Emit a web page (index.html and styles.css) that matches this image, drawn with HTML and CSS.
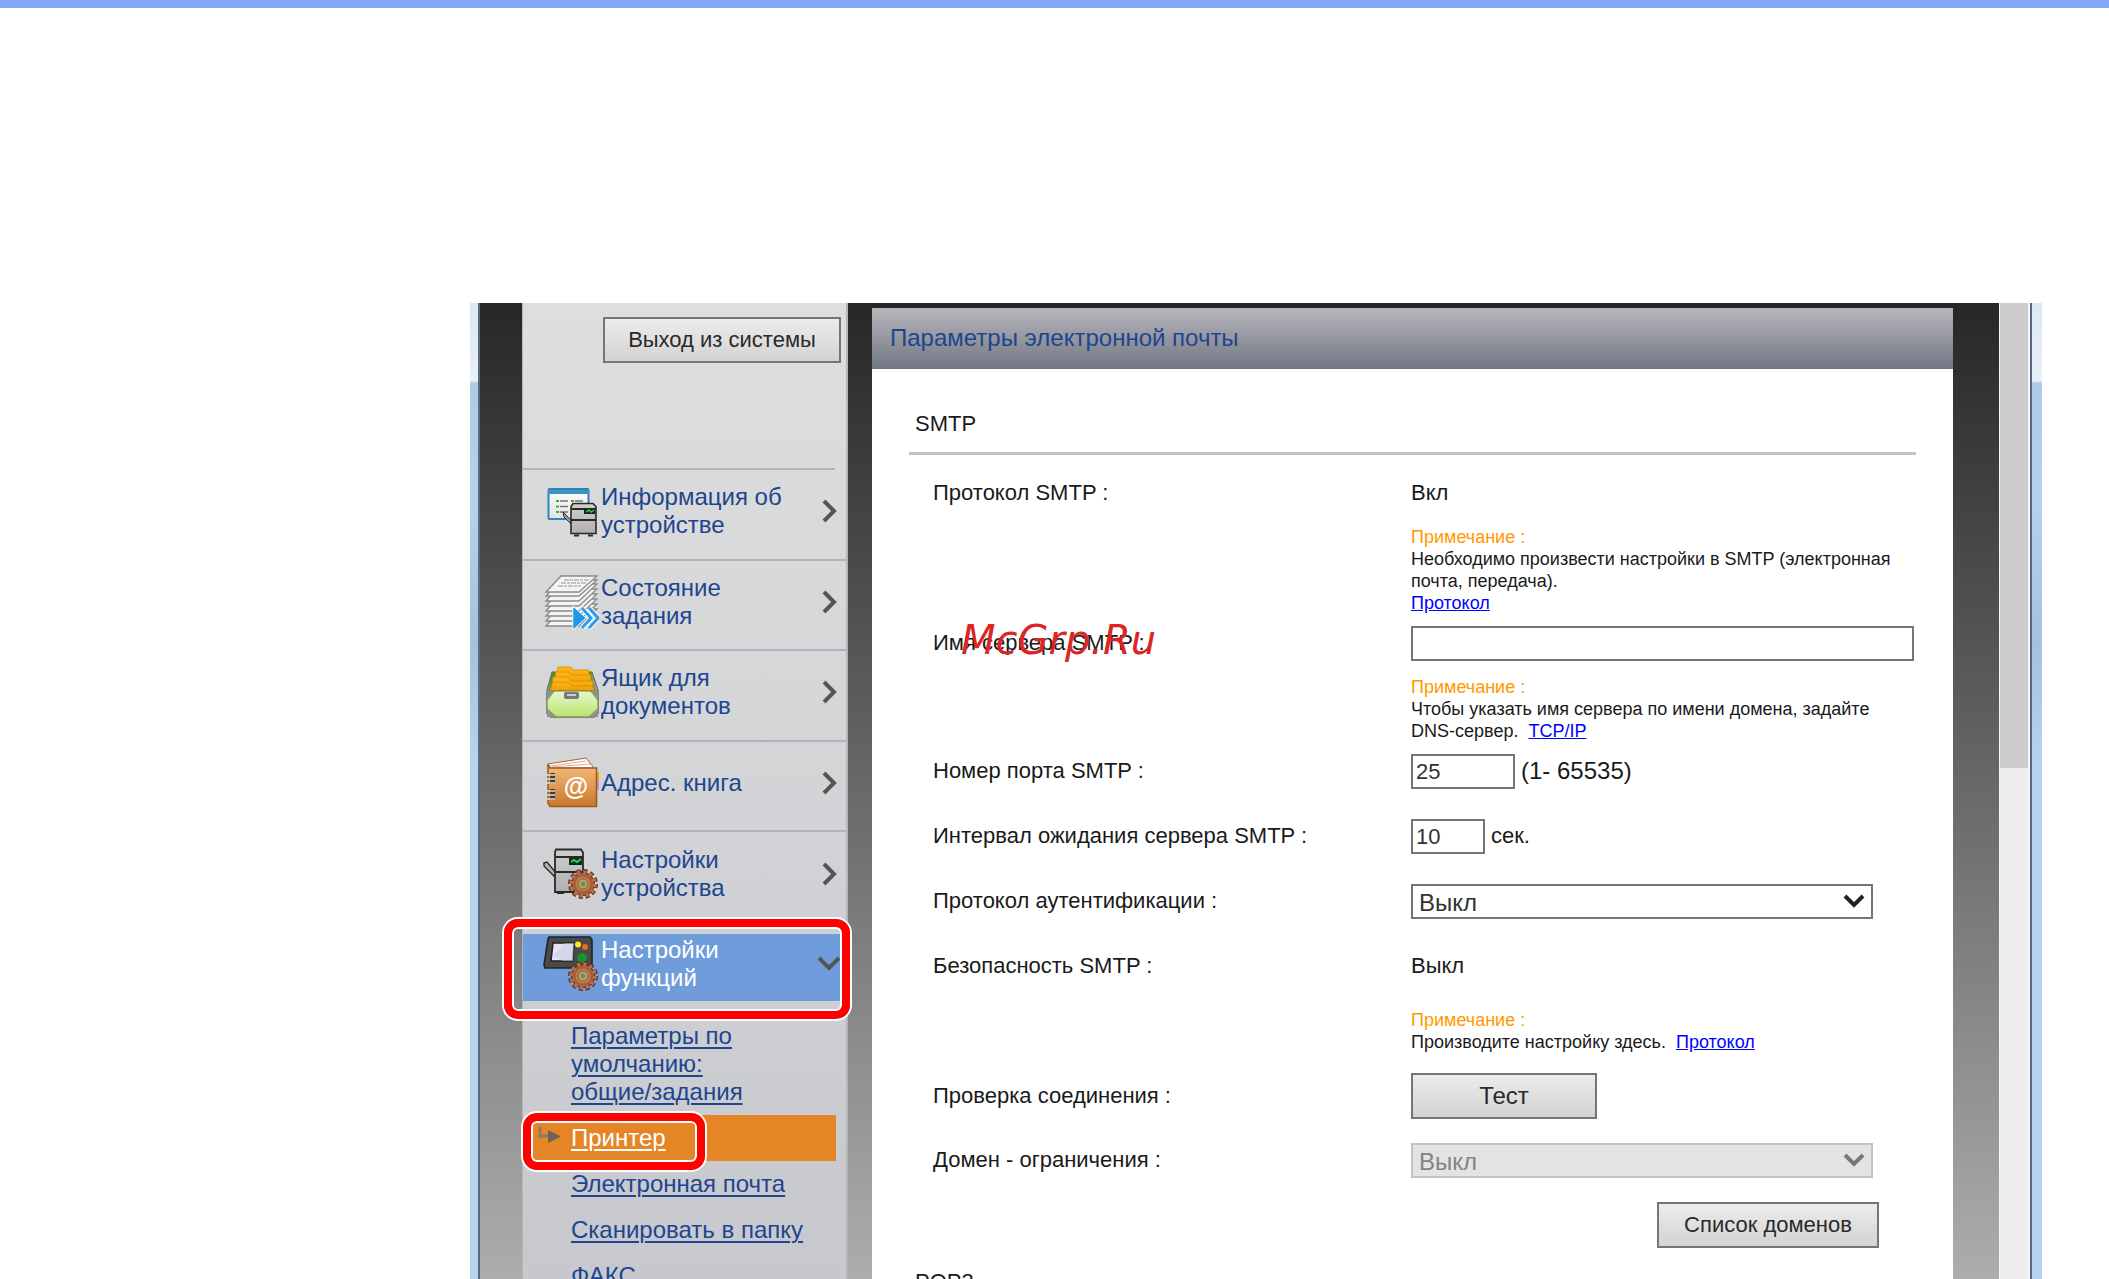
FILE: index.html
```html
<!DOCTYPE html>
<html lang="ru">
<head>
<meta charset="utf-8">
<title>Параметры электронной почты</title>
<link rel="stylesheet" href="styles.css">
</head>
<body>
<svg class="defs" aria-hidden="true">
  <defs>
    <linearGradient id="paper" x1="0" y1="0" x2="0" y2="1"><stop offset="0" stop-color="#fff"/><stop offset="1" stop-color="#e2e2e2"/></linearGradient>
    <linearGradient id="metal" x1="0" y1="0" x2="0" y2="1"><stop offset="0" stop-color="#cfcfcf"/><stop offset="1" stop-color="#b0b0b0"/></linearGradient>
    <linearGradient id="green" x1="0" y1="0" x2="0" y2="1"><stop offset="0" stop-color="#e6f7cf"/><stop offset="1" stop-color="#b9e46b"/></linearGradient>
    <linearGradient id="folder" x1="0" y1="0" x2="0" y2="1"><stop offset="0" stop-color="#ffb91e"/><stop offset="1" stop-color="#f09a00"/></linearGradient>
    <linearGradient id="cover" x1="0" y1="0" x2="0" y2="1"><stop offset="0" stop-color="#f6bd80"/><stop offset="1" stop-color="#c9782c"/></linearGradient>
    <g id="gear">
      <circle r="12.5" fill="none" stroke="#5e2d17" stroke-width="5" stroke-dasharray="3.9 2.64"/>
      <circle r="11.5" fill="#a55c37" stroke="#5e2d17"/>
      <circle r="11.8" fill="none" stroke="#b9714a" stroke-width="4" stroke-dasharray="3 3.18"/>
      <circle r="7.5" fill="#c07a50"/>
      <circle r="5" fill="#b9a94e" stroke="#7d6a2c"/>
      <circle r="2.4" fill="#6d7f99"/>
    </g>
  </defs>
</svg>
<div class="page">
  <div class="window">
    <div class="edge edge-left"></div>
    <div class="screen">
      <aside class="sidebar">
        <button class="btn logout" type="button">Выход из системы</button>
        <nav>
          <div class="menu">
            <a class="item" href="#">
              <svg class="icon" viewBox="0 0 56 56">
                <rect x="5.5" y="6" width="40" height="30" rx="1" fill="url(#paper)" stroke="#2d86b8" stroke-width="2"/>
                <path d="M5 7h41v4H5z" fill="#3c93c4"/>
                <path d="M17 18h8M32 18h8M17 23.500h8M17 29h8" stroke="#777" stroke-width="1.500"/>
                <path d="M13 18h3M28 18h3M13 23.500h3M13 29h3" stroke="#3cb51c" stroke-width="2"/>
                <path d="M20 29l8 8v4l-7-7z" fill="#999" stroke="#333"/>
                <path d="M30 20.500h20l3 3v27H28v-27z" fill="url(#metal)" stroke="#2a2a2a" stroke-width="1.600"/>
                <path d="M28 26h25M28 37h25M31 52.500h5M45 52.500h5" stroke="#2a2a2a" stroke-width="1.800"/>
                <path d="M41 26h11v5H41z" fill="#123"/><path d="M43 29l3-2 2 2 3-2" stroke="#2ddb2d" stroke-width="1.500" fill="none"/>
              </svg>
              <span class="text">Информация об устройстве</span>
              <svg class="chev" viewBox="0 0 16 24"><path d="M2 2l10 10L2 22" /></svg>
            </a>
            <a class="item" href="#">
              <svg class="icon" viewBox="0 0 56 56">
                <g fill="#f4f4f4" stroke="#8b8b8b" stroke-width="1.300">
                  <path d="M3 52L18 35H54L36 52z"/><path d="M3 47L18 30H54L36 47z"/><path d="M3 42L18 25H54L36 42z"/><path d="M3 37L18 20H54L36 37z"/><path d="M3 32L18 15H54L36 32z"/><path d="M3 27L18 10H54L36 27z"/><path d="M3 22L18 6H54L36 22z"/><path d="M3 18L18 2H54L36 18z"/>
                </g>
                <path d="M21 6h25M18 9h25M15 12h23" stroke="#b2b2b2" stroke-width="1.500" stroke-dasharray="5 1 3 1"/>
                <path d="M30 32l13 12-13 12z" fill="#1f97ee" stroke="#fff"/>
                <path d="M39 34l9 10-9 10M46 34l9 10-9 10" fill="none" stroke="#fff" stroke-width="5"/>
                <path d="M30.500 34v20l11-10z" fill="#1f97ee"/>
                <path d="M39 34l9 10-9 10M46 34l9 10-9 10" fill="none" stroke="#2a9df0" stroke-width="3"/>
              </svg>
              <span class="text">Состояние задания</span>
              <svg class="chev" viewBox="0 0 16 24"><path d="M2 2l10 10L2 22" /></svg>
            </a>
            <a class="item" href="#">
              <svg class="icon" viewBox="0 0 56 56">
                <path d="M9 8h40l6 18v24l-3 3H7l-3-3V26z" fill="#9b9b9b" stroke="#5d5d5d"/>
                <path d="M9 8h39l4 18H6z" fill="#4d8f2a"/>
                <g fill="url(#folder)" stroke="#d98c00" stroke-width=".8">
                  <path d="M15 3h13l2 3h16v12H13z"/><path d="M13 8h13l2 3h20v10H11z"/><path d="M10 13h15l3 4h22v9H8z"/><path d="M10 18l16 1 3 3h20l3 5H7z"/>
                </g>
                <path d="M4 27h51v23l-3 3H7l-3-3z" fill="url(#green)" stroke="#6d7a55"/>
                <path d="M4 27h8l-8 10zM55 27h-8l8 10zM4 44v9h10zM55 44v9H45z" fill="#8e9483"/>
                <rect x="21" y="28" width="15" height="7" rx="2" fill="#777"/><path d="M24 31h9" stroke="#ccc" stroke-width="2"/>
              </svg>
              <span class="text">Ящик для документов</span>
              <svg class="chev" viewBox="0 0 16 24"><path d="M2 2l10 10L2 22" /></svg>
            </a>
            <a class="item" href="#">
              <svg class="icon" viewBox="0 0 56 56">
                <path d="M50 17h7v8h-7z" fill="#f5a800"/><path d="M50 25h7v10h-7z" fill="#b992e0"/>
                <path d="M5 9l38-6 8 10H6z" fill="#fff" stroke="#a3652f"/>
                <path d="M7 11l36-5M9 12l38-3" stroke="#e8a898"/>
                <path d="M5 9l2 4h46.500v38.500H7L5 48z" fill="url(#cover)" stroke="#9c5c22" stroke-width="1.600"/>
                <path d="M7 18h5v11H7zM7 34h5v11H7z" fill="#4a3a2c"/>
                <path d="M3 20h9M3 24h9M3 28h9M3 36h9M3 40h9M3 44h9" stroke="#ddd" stroke-width="1.600"/>
                <text class="at" x="33" y="40" text-anchor="middle">@</text>
              </svg>
              <span class="text">Адрес. книга</span>
              <svg class="chev" viewBox="0 0 16 24"><path d="M2 2l10 10L2 22" /></svg>
            </a>
            <a class="item" href="#">
              <svg class="icon" viewBox="0 0 56 56">
                <path d="M1 17l3-1 9 11v5L1 20z" fill="#b5b5b5" stroke="#2a2a2a" stroke-width="1.400"/>
                <path d="M13 3.500h25l2 3V46H12V6z" fill="url(#metal)" stroke="#2a2a2a" stroke-width="1.800"/>
                <path d="M12 11h28M12 26h28M14 47h7" stroke="#2a2a2a" stroke-width="1.800"/>
                <path d="M26 12h13v7H26z" fill="#123"/><path d="M28 16l3-2 3 2 4-3" stroke="#2ddb2d" stroke-width="2" fill="none"/>
                <use href="#gear" x="40" y="38"/>
              </svg>
              <span class="text">Настройки устройства</span>
              <svg class="chev" viewBox="0 0 16 24"><path d="M2 2l10 10L2 22" /></svg>
            </a>
          </div>
          <a class="item active" href="#">
            <svg class="icon" viewBox="0 0 56 56">
              <path d="M6 1h41l2 3v27l-2 1H2l-1-3L5 3z" fill="#4a4a4a" stroke="#222" stroke-width="1.600"/>
              <path d="M10 7h21l-1 18H8z" fill="#e3e5f3" stroke="#222" stroke-width="1.500"/><path d="M10 20L22 7h9l-1 18H20z" fill="#c5c9e2" opacity=".5"/>
              <circle cx="35" cy="8.500" r="3" fill="#f5ec1c"/><circle cx="42" cy="11" r="3" fill="#ee6a1a"/><circle cx="39" cy="22" r="5" fill="#18932e"/>
              <use href="#gear" x="40" y="40"/>
            </svg>
            <span class="text">Настройки функций</span>
            <svg class="chev chev-down" viewBox="0 0 24 16"><path d="M2 2l10 10L22 2" /></svg>
            <span class="callout callout-item"></span>
          </a>
          <ul class="submenu">
            <li><a href="#">Параметры по умолчанию: общие/задания</a></li>
            <li class="current">
              <svg class="arrow" viewBox="0 0 24 18"><path d="M2 0v9h10" fill="none" stroke="#8a7a66" stroke-width="3"/><path d="M10 3l13 6.500L10 16z" fill="#6c6459"/></svg>
              <a href="#">Принтер</a>
              <span class="callout callout-link"></span>
            </li>
            <li><a href="#">Электронная почта</a></li>
            <li><a href="#">Сканировать в папку</a></li>
            <li><a href="#">ФАКС</a></li>
          </ul>
        </nav>
      </aside>
      <main class="panel">
        <h1>Параметры электронной почты</h1>
        <form>
          <h2>SMTP</h2>
          <div class="rows">
            <div class="row noted">
              <span>Протокол SMTP :</span>
              <div><div class="field">Вкл</div>
                <p class="note"><span class="note-title">Примечание :</span><br>Необходимо произвести настройки в SMTP (электронная почта, передача).<br><a href="#">Протокол</a></p></div>
            </div>
            <div class="row noted">
              <label class="marked" for="server">Имя сервера SMTP :<span class="watermark">McGrp.Ru</span></label>
              <div><input class="wide" id="server" type="text">
                <p class="note"><span class="note-title">Примечание :</span><br>Чтобы указать имя сервера по имени домена, задайте <span class="nowrap">DNS-сервер.</span>&nbsp; <a href="#">TCP/IP</a></p></div>
            </div>
            <div class="row">
              <label for="port">Номер порта SMTP :</label>
              <div class="field"><input class="port" id="port" type="text" value="25"><span class="range">(1- 65535)</span></div>
            </div>
            <div class="row">
              <label for="timeout">Интервал ожидания сервера SMTP :</label>
              <div class="field"><input class="timeout" id="timeout" type="text" value="10"><span>сек.</span></div>
            </div>
            <div class="row">
              <label for="auth">Протокол аутентификации :</label>
              <div class="select"><select id="auth"><option>Выкл</option></select><svg viewBox="0 0 22 16"><path d="M2 2l9 9 9-9"/></svg></div>
            </div>
            <div class="row security">
              <span>Безопасность SMTP :</span>
              <div><div class="field">Выкл</div>
                <p class="note"><span class="note-title">Примечание :</span><br>Производите настройку здесь.&nbsp; <a href="#">Протокол</a></p></div>
            </div>
            <div class="row test">
              <span>Проверка соединения :</span>
              <div><button class="btn test-btn" type="button">Тест</button></div>
            </div>
            <div class="row domain">
              <label for="domain">Домен - ограничения :</label>
              <div>
                <div class="select disabled"><select id="domain" disabled><option>Выкл</option></select><svg viewBox="0 0 22 16"><path d="M2 2l9 9 9-9"/></svg></div>
                <button class="btn domains" type="button">Список доменов</button>
              </div>
            </div>
          </div>
          <h2>POP3</h2>
        </form>
      </main>
    </div>
    <div class="scrollbar"><div class="thumb"></div></div>
    <div class="edge edge-right"></div>
  </div>
</div>
</body>
</html>
```
FILE: styles.css
```css
* { box-sizing: border-box; }

body {
  margin: 0;
  background: #fff;
  color: #1a1a1a;
  font: 22px/28px "Liberation Sans", Arial, sans-serif;
}

.defs { position: absolute; width: 0; height: 0; }

.page {
  display: flex;
  height: 100vh;
  overflow: hidden;
  border-top: 8px solid #81a8f8;
  padding: 295px 67px 0 470px;
}

.window { display: flex; flex: 1; min-width: 0; }

.edge {
  width: 10px;
  background: linear-gradient(#dce8f4, #e8f0f9 78px, #adcae6 80px, #b4d1ee 200px, #a6c1dd 340px, #b6d3ef 460px);
}
.edge-left { border-right: 2px solid #5b6879; }
.edge-right { width: 12px; border-left: 2px solid #5b6879; }

.screen {
  display: flex;
  flex: 1;
  gap: 24px;
  min-width: 0;
  padding: 0 46px 0 42px;
  background: linear-gradient(#272727, #5a5a5a 380px, #adadad);
}

.sidebar {
  flex: none;
  width: 326px;
  padding-top: 14px;
  border: solid #b5b6b8;
  border-width: 0 2px 0 1px;
  background: linear-gradient(#dedede, #d5d6d8 400px, #c6c8cd);
}

.btn {
  display: block;
  height: 46px;
  padding: 0;
  border: 2px solid #757575;
  background: linear-gradient(#ececec, #d3d3d3);
  color: #2a2a2a;
  font: inherit;
}
.logout { width: 238px; margin: 0 0 105px 80px; }

nav { font-size: 24px; }
.menu {
  display: grid;
  grid-auto-rows: 1fr;
  height: 453px;
}
.item {
  position: relative;
  display: flex;
  align-items: center;
  gap: 2px;
  padding: 0 8px 8px 20px;
  color: #20458f;
  text-decoration: none;
}
.menu .item { padding-bottom: 6px; border-top: 2px solid #b3b4bb; }
.menu .item:first-child {
  border-color: transparent;
  background: linear-gradient(#b3b4bb, #b3b4bb) 0 0 / 312px 2px no-repeat border-box;
}
.icon { flex: none; width: 56px; height: 56px; }
.at { font: bold 25px "Liberation Sans", Arial, sans-serif; fill: #fff; }
.text { width: 190px; margin-right: auto; }
.chev { flex: none; width: 16px; height: 24px; fill: none; stroke: #555; stroke-width: 4; }
.chev-down { width: 24px; height: 16px; }

.active {
  height: 67px;
  margin-top: 13px;
  padding-right: 5px;
  background: #6f9ddb;
  color: #fff;
}
.callout {
  position: absolute;
  z-index: 1;
  border: 8px solid #f00;
  border-radius: 14px;
  box-shadow: 0 0 0 2px #fff, inset 0 0 0 2px #fff;
}
.callout-item { inset: -15px -4px -18px -19px; }
.callout-link { top: -2px; bottom: -9px; left: -10px; width: 182px; }

.submenu { margin: 12px 10px 0; padding: 0; list-style: none; }
.submenu li { position: relative; padding: 9px 0 9px 38px; }
.submenu a { display: block; width: 240px; color: #20458f; text-underline-offset: 3px; text-decoration-thickness: 2px; }
.submenu li:first-child a { width: 190px; }
.submenu .current { background: #e58525; }
.submenu .current a { color: #fff; }
.arrow { position: absolute; left: 5px; top: 12px; width: 24px; height: 18px; }

.panel { flex: 1; min-width: 0; margin-top: 5px; background: #fff; }

h1, h2 { margin: 0; font-size: 22px; font-weight: normal; }
h1 {
  padding: 16px 18px 17px;
  background: linear-gradient(#b6b6bc, #8e9099 60%, #6f7782);
  color: #20458f;
  font-size: 24px;
}
form { padding: 41px 37px 0; }
h2 { padding: 0 6px 14px; border-bottom: 3px solid #c2c2c9; }

.rows { padding: 21px 2px 0 24px; }
.row {
  display: grid;
  grid-template-columns: 478px 1fr;
  align-items: start;
  margin-bottom: 30px;
  line-height: 34px;
}
.noted { margin-bottom: 12px; }
.security { margin-bottom: 20px; }
.test { align-items: center; margin-bottom: 24px; }
.domain { margin-bottom: 20px; }

.field { display: flex; gap: 6px; height: 35px; }
.note { margin: 15px 0 0; font-size: 18px; line-height: 22px; }
.security .note { margin-top: 25px; }
.note-title { color: #f90; }
.note a { color: #00f; }
.nowrap { white-space: nowrap; }

input, select {
  height: 35px;
  border: 2px solid #757575;
  border-radius: 0;
  background: #fff;
  color: #333;
  font: inherit;
}
input { display: block; padding: 0 3px; }
.wide { width: 100%; }
.port { width: 104px; }
.timeout { width: 74px; }
.range { font-size: 24px; }

.select { display: grid; width: 462px; }
.select > * { grid-area: 1 / 1; }
.select select { appearance: none; padding: 0 6px; font-size: 24px; }
.select svg {
  align-self: center;
  justify-self: end;
  width: 22px;
  height: 16px;
  margin-right: 8px;
  fill: none;
  stroke: #222;
  stroke-width: 4;
  pointer-events: none;
}
.disabled select { border-color: #c3c3c3; background: #e3e3e3; color: #838383; opacity: 1; }
.disabled svg { stroke: #777; }
.test-btn { width: 186px; font-size: 24px; }
.domains { width: 222px; margin: 24px 0 0 246px; }

.marked { position: relative; }
.watermark {
  position: absolute;
  left: 28px;
  top: -2px;
  color: #dc2626;
  font: italic 40px/32px "DejaVu Sans", sans-serif;
}

.scrollbar { width: 31px; border: solid #f6f6f6; border-width: 0 2px 0 1px; background: #eee; }
.thumb { height: 465px; background: #cdcdcd; }
```
